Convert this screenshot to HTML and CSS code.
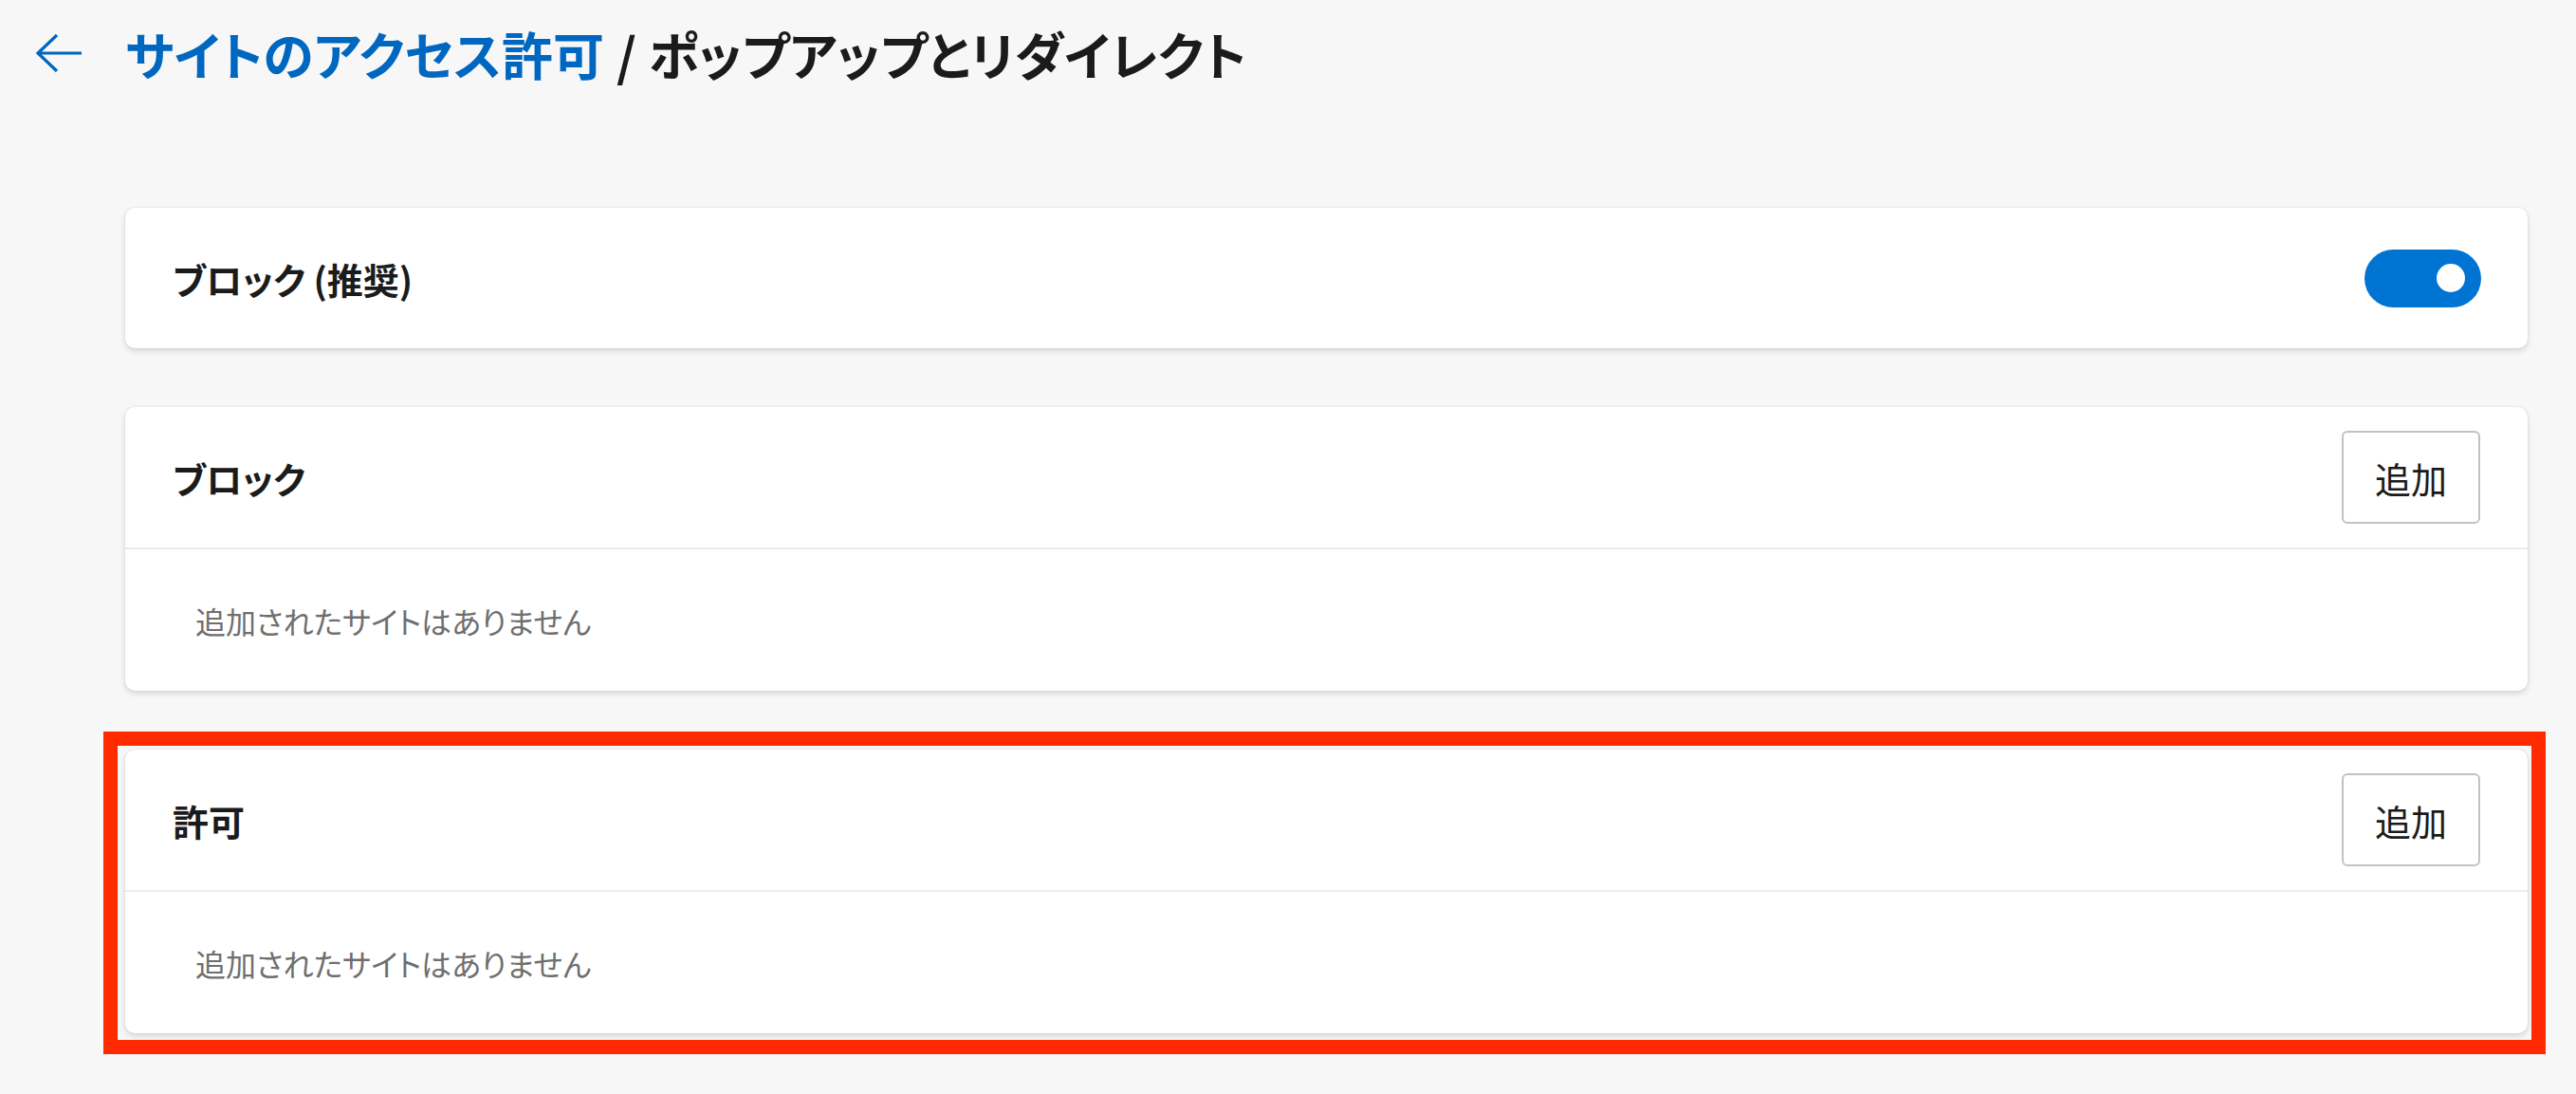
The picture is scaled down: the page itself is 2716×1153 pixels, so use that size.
FILE: index.html
```html
<!DOCTYPE html>
<html lang="ja">
<head>
    <meta charset="UTF-8">
    <meta name="viewport" content="width=device-width, initial-scale=1.0">
    <title>ポップアップとリダイレクト</title>
    <link rel="stylesheet" href="styles.css">
</head>
<body>
    <header class="page-header">
        <button class="back-btn" aria-label="戻る">
            <svg viewBox="0 0 50 42" width="50" height="42">
                <path d="M23 2 L3 21 L23 40 M3 21 H49" fill="none" stroke="#0067c0" stroke-width="3.2" stroke-linejoin="miter"/>
            </svg>
        </button>
        <h1 class="title">
            <a class="crumb" href="#">サイトのアクセス許可</a>
            <span class="sep">/</span>
            <span>ポップアップとリダイレクト</span>
        </h1>
    </header>

    <main class="content">
        <section class="card card-row">
            <span class="label">ブロック (推奨)</span>
            <span class="toggle on"><span class="knob"></span></span>
        </section>

        <section class="card">
            <div class="card-head">
                <span class="label">ブロック</span>
                <button class="add-btn">追加</button>
            </div>
            <div class="card-body">追加されたサイトはありません</div>
        </section>

        <div class="highlight-wrap">
            <section class="card">
                <div class="card-head">
                    <span class="label">許可</span>
                    <button class="add-btn">追加</button>
                </div>
                <div class="card-body">追加されたサイトはありません</div>
            </section>
            <div class="highlight"></div>
        </div>
    </main>
</body>
</html>
```

FILE: styles.css
```css
:root {
    --bg: #f7f7f7;
    --card: #ffffff;
    --text: #1b1b1b;
    --muted: #6f6f6f;
    --accent: #0067c0;
    --toggle: #0074d3;
    --divider: #ebebeb;
    --mark: #ff2a00;
}

* {
    margin: 0;
    padding: 0;
    box-sizing: border-box;
}

body {
    font-family: "Noto Sans CJK JP", "Noto Sans", sans-serif;
    font-feature-settings: "palt";
    background-color: var(--bg);
    color: var(--text);
    min-height: 100vh;
}

.page-header {
    display: flex;
    align-items: center;
    height: 112px;
    padding-left: 37px;
}

.back-btn {
    display: flex;
    background: none;
    border: none;
    width: 50px;
    margin-right: 45px;
}

.title {
    font-size: 54px;
    font-weight: 700;
    display: flex;
    gap: 13px;
}

.crumb {
    color: var(--accent);
    text-decoration: none;
}

.content {
    display: flex;
    flex-direction: column;
    gap: 62px;
    padding: 107px 51px 0 132px;
}

.card {
    background-color: var(--card);
    border-radius: 10px;
    box-shadow: 0 3px 6px rgba(0, 0, 0, 0.13), 0 0 2px rgba(0, 0, 0, 0.12);
}

.card-row {
    display: flex;
    align-items: center;
    justify-content: space-between;
    height: 148px;
    padding: 0 49px 0 50px;
}

.label {
    font-size: 38px;
    font-weight: 700;
}

.toggle {
    display: flex;
    align-items: center;
    justify-content: flex-end;
    width: 123px;
    height: 61px;
    padding-right: 17px;
    border-radius: 31px;
    background-color: var(--toggle);
}

.knob {
    width: 30px;
    height: 30px;
    border-radius: 50%;
    background-color: #fff;
}

.card-head {
    display: flex;
    align-items: center;
    justify-content: space-between;
    height: 150px;
    padding: 0 50px;
    border-bottom: 2px solid var(--divider);
}

.add-btn {
    width: 146px;
    height: 98px;
    background-color: #fff;
    border: 2px solid #c2c2c2;
    border-radius: 6px;
    font-family: inherit;
    font-size: 38px;
    color: var(--text);
}

.card-body {
    display: flex;
    align-items: center;
    height: 149px;
    padding-left: 74px;
    font-size: 32px;
    color: var(--muted);
}

.highlight-wrap {
    position: relative;
}

.highlight {
    position: absolute;
    top: -19px;
    left: -23px;
    right: -19px;
    bottom: -22px;
    border: 15px solid var(--mark);
    pointer-events: none;
}
```
